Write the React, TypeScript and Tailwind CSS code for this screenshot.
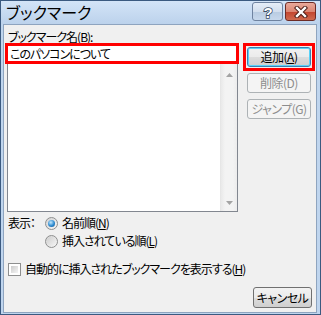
import React from 'react';

const jp = "font-['Noto_Sans_CJK_JP','Noto_Sans',sans-serif] [font-feature-settings:'palt']";

const Mn = ({ c }: { c: string }) => <span className="underline underline-offset-[1px]">{c}</span>;

const btnBase = 'h-[20px] rounded-[3px] border flex items-center justify-center text-[12px] leading-none tracking-[-0.5px]';
const btnNormal = 'border-[#707070] bg-[linear-gradient(to_bottom,#f2f2f2_0%,#ebebeb_50%,#dddddd_51%,#cfcfcf_100%)] text-black';
const btnDisabled = 'border-[#adb2b5] bg-[#f4f4f4] text-[#8d8d8d]';

const Radio = ({ checked }: { checked?: boolean }) => (
  <div className="w-[13px] h-[13px] rounded-full border border-[#8e8f8f] bg-[linear-gradient(135deg,#d2d2d2,#f7f7f7)] flex items-center justify-center">
    {checked ? (
      <div className="w-[7px] h-[7px] rounded-full bg-[radial-gradient(circle_at_40%_35%,#c4e8fd,#2c8ad0_55%,#174f86)]" />
    ) : (
      <div className="w-[9px] h-[9px] rounded-full bg-[linear-gradient(135deg,#cfcfcf,#f4f4f4)]" />
    )}
  </div>
);

export default function App() {
  return (
    <div className={`w-[321px] h-[315px] flex flex-col border border-[#3b5a80] bg-[#bfd5ee] ${jp}`}>
      {/* title bar */}
      <div className="h-[23px] flex items-start bg-[linear-gradient(to_bottom,#d3e4f7,#bcd2ec)]">
        <div className="ml-[5px] mt-[1px] text-[16px] leading-[20px] text-black">ブックマーク</div>
        <div className="ml-auto mt-[1px] mr-[4px] flex gap-[2px]">
          <div className="w-[31px] h-[19px] rounded-[3px] border border-[#6f83a0] bg-[linear-gradient(to_bottom,#e6eef8_0%,#d3dfee_50%,#b9cbe1_51%,#c7d8ec_100%)] flex items-center justify-center">
            <svg width="14" height="16" viewBox="0 0 14 16">
              <text x="7" y="13.5" textAnchor="middle" fontSize="15" fontWeight="bold" fontFamily="'Liberation Sans',sans-serif" fill="#ffffff" stroke="#3a4d66" strokeWidth="1.6" paintOrder="stroke">?</text>
            </svg>
          </div>
          <div className="w-[31px] h-[19px] rounded-[3px] border border-[#6d2b25] bg-[linear-gradient(to_bottom,#e9a99b_0%,#dc8673_50%,#c2432d_51%,#cf6a4f_100%)] flex items-center justify-center">
            <svg width="14" height="12" viewBox="0 0 14 12">
              <path d="M3 2 L11 10 M11 2 L3 10" stroke="#4a1c16" strokeWidth="4.4" strokeLinecap="square" />
              <path d="M3 2 L11 10 M11 2 L3 10" stroke="#ffffff" strokeWidth="2.4" strokeLinecap="square" />
            </svg>
          </div>
        </div>
      </div>

      {/* client */}
      <div className="flex-1 ml-[2px] mr-[3px] mb-[1px] bg-[#f0f0f0] border border-[#8ea4bf] flex flex-col text-black text-[12px] tracking-[-1px]">
        <div className="flex">
          <div className="w-[239px] flex flex-col">
            <div className="ml-[4px] mt-[5px] h-[13px] leading-[13px]">
              ブックマーク名(<Mn c="B" />):
            </div>
            <div className="ml-[1px] w-[234px] h-[21px] border-[3px] border-[#ff0000] bg-white flex items-center pl-[2px] leading-none">
              このパソコンについて
            </div>
            <div className="ml-[3px] w-[231px] h-[148px] border border-t-0 border-[#828790] bg-white flex justify-end">
              <div className="w-[17px] h-full border-l border-[#e6e6e6] bg-[linear-gradient(to_right,#e9e9e9,#f3f3f3_25%,#f3f3f3_75%,#ececec)] flex flex-col items-center justify-between pt-[9px] pb-[6px]">
                <svg width="7" height="4" viewBox="0 0 7 4">
                  <path d="M0 4 L3.5 0 L7 4 Z" fill="#a3a3a3" />
                </svg>
                <svg width="7" height="4" viewBox="0 0 7 4">
                  <path d="M0 0 L7 0 L3.5 4 Z" fill="#a3a3a3" />
                </svg>
              </div>
            </div>
          </div>
          <div className="flex flex-col pt-[18px]">
            <div className="w-[72px] h-[28px] border-[3px] border-[#ff0000] p-[1px]">
              <div className={`${btnBase} w-[64px] h-[20px] border-[#3c7fb1] shadow-[inset_0_0_0_1px_#5ad2f8] bg-[linear-gradient(to_bottom,#f2f2f2_0%,#ebebeb_50%,#dddddd_51%,#cfcfcf_100%)]`}>
                追加(<Mn c="A" />)
              </div>
            </div>
            <div className={`${btnBase} ${btnDisabled} ml-[4px] mt-[2px] w-[64px]`}>削除(D)</div>
            <div className={`${btnBase} ${btnDisabled} ml-[4px] mt-[6px] w-[64px]`}>ジャンプ(G)</div>
          </div>
        </div>

        <div className="mt-[4px] h-[14px] flex items-center leading-none">
          <div className="ml-[4px] w-[37px]">表示：</div>
          <Radio checked />
          <div className="ml-[4px]">
            名前順(<Mn c="N" />)
          </div>
        </div>
        <div className="mt-[4px] h-[14px] flex items-center leading-none">
          <div className="ml-[41px]">
            <Radio />
          </div>
          <div className="ml-[4px]">
            挿入されている順(<Mn c="L" />)
          </div>
        </div>

        <div className="mt-[14px] h-[14px] flex items-center leading-none">
          <div className="ml-[4px] w-[13px] h-[13px] border border-[#8e8f8f] bg-white p-[2px]">
            <div className="w-full h-full bg-[linear-gradient(135deg,#cbcbcb,#f5f5f5)]" />
          </div>
          <div className="ml-[4px]">
            自動的に挿入されたブックマークを表示する(<Mn c="H" />)
          </div>
        </div>

        <div className={`${btnBase} ${btnNormal} mt-auto mb-[4px] mr-[4px] self-end w-[59px] h-[21px]`}>
          キャンセル
        </div>
      </div>
    </div>
  );
}
